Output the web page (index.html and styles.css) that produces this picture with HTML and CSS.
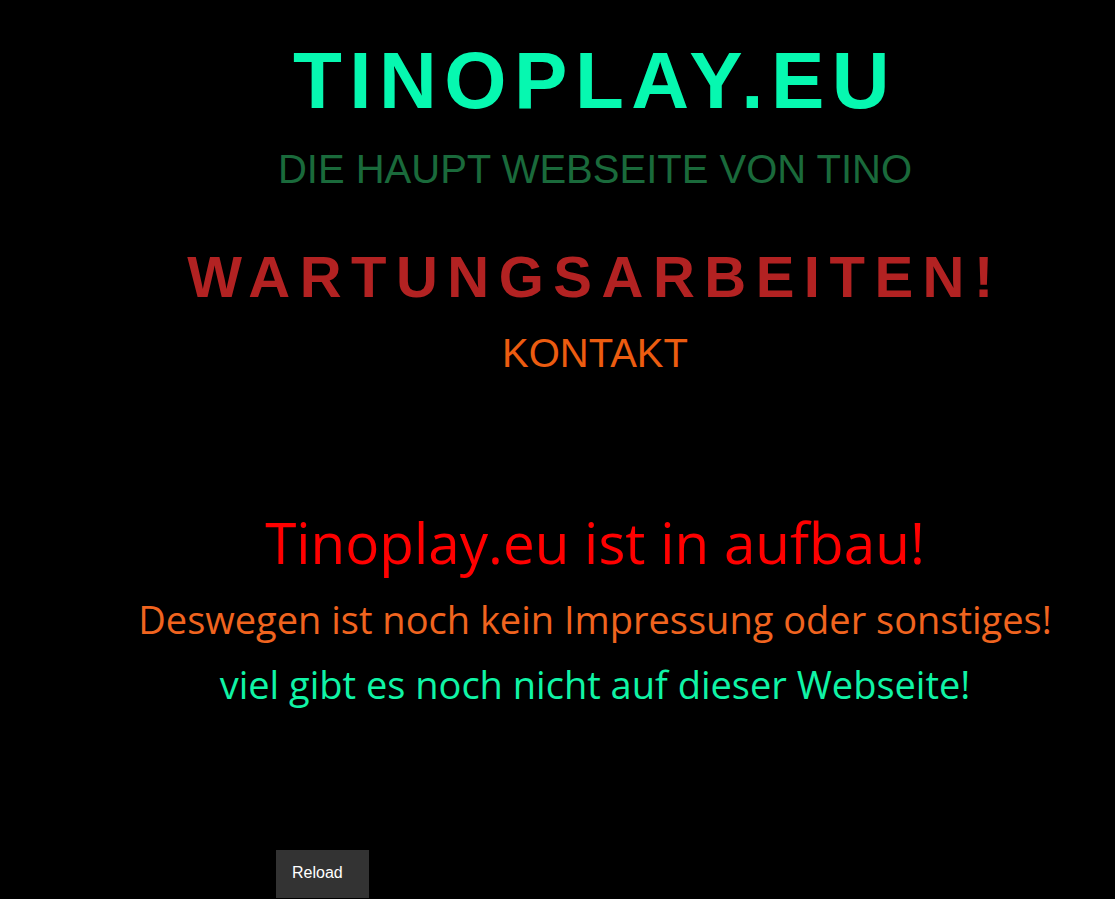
FILE: index.html
```html
<!DOCTYPE html>
<html lang="de">
<head>
<meta charset="utf-8">
<title>Tinoplay.eu</title>
<link rel="stylesheet" href="styles.css">
</head>
<body>
<main class="page">
  <h1 class="title">TINOPLAY.EU</h1>
  <p class="subtitle">DIE HAUPT WEBSEITE VON TINO</p>
  <h2 class="warning">WARTUNGSARBEITEN!</h2>
  <a class="contact" href="#">KONTAKT</a>
  <p class="line line-main">Tinoplay.eu ist in aufbau!</p>
  <p class="line line-orange">Deswegen ist noch kein Impressung oder sonstiges!</p>
  <p class="line line-green">viel gibt es noch nicht auf dieser Webseite!</p>
</main>
<button class="reload" type="button">Reload</button>
</body>
</html>
```
FILE: styles.css
```css
html, body {
  margin: 0;
  padding: 0;
  background: #000;
  height: 100%;
  overflow: hidden;
}
body {
  font-family: "Liberation Sans", Arial, sans-serif;
}
.page {
  padding-left: 75px;
  display: flex;
  flex-direction: column;
  align-items: center;
  text-align: center;
}
.title {
  margin: 41px 0 0;
  font-size: 80px;
  line-height: 80px;
  font-weight: 700;
  letter-spacing: 7.5px;
  color: #06f8b0;
}
.subtitle {
  margin: 28px 0 0;
  font-size: 40px;
  line-height: 40px;
  color: #1a6a3b;
}
.warning {
  margin: 59px 0 0;
  font-size: 58px;
  line-height: 58px;
  font-weight: 700;
  letter-spacing: 9.5px;
  color: #b22222;
}
.contact {
  margin-top: 27px;
  font-size: 40px;
  line-height: 40px;
  color: #ec5c10;
  text-decoration: none;
}
.line {
  font-family: "Open Sans", "Noto Sans", sans-serif;
  margin: 0;
}
.line-main {
  margin-top: 135px;
  font-size: 56.6px;
  line-height: 70px;
  color: #ff0000;
}
.line-orange {
  margin-top: 19px;
  font-size: 38px;
  line-height: 44px;
  color: #f0641f;
}
.line-green {
  margin-top: 21px;
  font-size: 38px;
  line-height: 44px;
  color: #10f4a6;
}
.reload {
  position: fixed;
  left: 276px;
  top: 850px;
  width: 93px;
  height: 48px;
  box-sizing: border-box;
  padding: 14px 16px 16px;
  border: 0;
  background: #333333;
  color: #ffffff;
  font-family: "Liberation Sans", Arial, sans-serif;
  font-size: 16px;
  line-height: 18px;
  text-align: left;
}
```
